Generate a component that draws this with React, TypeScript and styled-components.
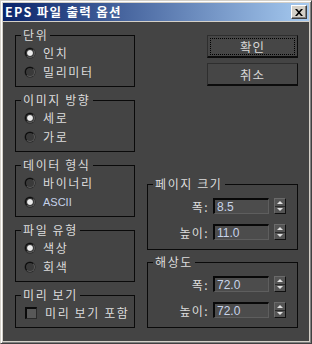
import React from "react";
import styled, { createGlobalStyle } from "styled-components";

const GlobalStyle = createGlobalStyle`
  html, body {
    margin: 0;
    padding: 0;
    background: #444444;
  }
  body {
    font-family: "Noto Sans CJK KR", "Noto Sans", sans-serif;
  }
`;

const Window = styled.div`
  width: 312px;
  height: 344px;
  box-sizing: border-box;
  display: flex;
  flex-direction: column;
  background: #d4d0c8;
  border: 1px solid;
  border-color: #d4d0c8 #404040 #404040 #d4d0c8;
  box-shadow: inset 1px 1px #ffffff, inset -1px -1px #808080;
  padding: 2px;
`;

const TitleBar = styled.div`
  height: 18px;
  flex-shrink: 0;
  display: flex;
  align-items: center;
  justify-content: space-between;
  padding-left: 2px;
  background: linear-gradient(to right, #0a246a, #a6caf0);
`;

const Title = styled.span`
  color: #ffffff;
  font-size: 12.5px;
  font-weight: bold;
  line-height: 18px;
  letter-spacing: 1.3px;
`;

const CloseButton = styled.div`
  width: 16px;
  height: 14px;
  margin-right: 2px;
  box-sizing: border-box;
  display: flex;
  align-items: center;
  justify-content: center;
  background: #d4d0c8;
  border: 1px solid;
  border-color: #ffffff #404040 #404040 #ffffff;
  box-shadow: inset -1px -1px #808080;
`;

const Body = styled.div`
  flex: 1;
  margin-top: 1px;
  display: flex;
  gap: 12px;
  padding: 6px 11px 13px 12px;
  background: #444444;
  color: #dcdcdc;
  font-size: 12px;
`;

const LeftColumn = styled.div`
  width: 120px;
  display: flex;
  flex-direction: column;
  gap: 6px;
`;

const RightColumn = styled.div`
  width: 151px;
  display: flex;
  flex-direction: column;
`;

const ButtonStack = styled.div`
  margin-top: 7px;
  display: flex;
  flex-direction: column;
  align-items: flex-end;
  gap: 5px;
`;

const DialogButton = styled.div<{ $focused?: boolean }>`
  width: 91px;
  height: 23px;
  box-sizing: border-box;
  display: flex;
  align-items: center;
  justify-content: center;
  background: #464646;
  border-top: 1px solid #2e2e2e;
  border-left: 1px solid #2e2e2e;
  border-right: 1px solid #0c0c0c;
  border-bottom: 2px solid #0c0c0c;
  color: #d8d8d8;
  font-size: 12.5px;
  letter-spacing: 1px;
  outline: ${(p) => (p.$focused ? "1px dotted #000" : "none")};
  outline-offset: -4px;
`;

const Group = styled.fieldset`
  margin: 0;
  padding: 0;
  min-width: 0;
  border: 1px solid #0a0a0a;
`;

const Caption = styled.legend`
  margin-left: 5px;
  padding: 0 2px;
  font-size: 12px;
  line-height: 14px;
  letter-spacing: 1.6px;
  color: #dcdcdc;
`;

const OptionList = styled.div`
  padding: 1px 0 5px 9px;
  display: flex;
  flex-direction: column;
`;

const Option = styled.div`
  height: 19px;
  display: flex;
  align-items: center;
  gap: 8px;
`;

const Radio = styled.span<{ $checked?: boolean }>`
  width: 10px;
  height: 10px;
  box-sizing: border-box;
  border-radius: 50%;
  background: ${(p) =>
    p.$checked
      ? "radial-gradient(circle, #ececec 0 2.2px, #bdbdbd 2.7px, #3a3a3a 3.3px)"
      : "#3a3a3a"};
  border: 1px solid;
  border-color: #0a0a0a #5a5a5a #5a5a5a #0a0a0a;
  box-shadow: 0 0 0 0.5px #222;
`;

const Checkbox = styled.span`
  width: 12px;
  height: 12px;
  box-sizing: border-box;
  background: #585858;
  border-top: 2px solid #0a0a0a;
  border-left: 2px solid #0a0a0a;
  border-right: 1px solid #2a2a2a;
  border-bottom: 1px solid #2a2a2a;
`;

const OptionLabel = styled.span<{ $latin?: boolean }>`
  font-family: ${(p) =>
    p.$latin
      ? '"Liberation Sans", Arial, sans-serif'
      : '"Noto Sans CJK KR", "Noto Sans", sans-serif'};
  font-size: ${(p) => (p.$latin ? "11px" : "12px")};
  color: ${(p) => (p.$latin ? "#c4d2ea" : "#dcdcdc")};
  letter-spacing: ${(p) => (p.$latin ? "0" : "1.6px")};
`;

const RightGroups = styled.div`
  margin-top: auto;
  display: flex;
  flex-direction: column;
  gap: 5px;
`;

const FieldList = styled.div`
  padding: 7px 0 9px 0;
  display: flex;
  flex-direction: column;
  gap: 10px;
`;

const FieldRow = styled.div`
  height: 16px;
  display: flex;
  align-items: center;
`;

const FieldLabel = styled.span`
  width: 61px;
  text-align: right;
  font-size: 12px;
  letter-spacing: 1.4px;
  color: #dcdcdc;
`;

const NumberBox = styled.input`
  width: 56px;
  height: 16px;
  margin: 0 0 0 4px;
  box-sizing: border-box;
  padding: 0 0 0 2px;
  background: #4c4c4c;
  border-top: 2px solid #080808;
  border-left: 2px solid #080808;
  border-right: 1px solid #5e5e5e;
  border-bottom: 1px solid #5e5e5e;
  color: #c8d4ea;
  font-family: "Liberation Sans", Arial, sans-serif;
  font-size: 12px;
  outline: none;
`;

const Spinner = styled.div`
  width: 12px;
  height: 16px;
  margin-left: 5px;
  box-sizing: border-box;
  display: flex;
  flex-direction: column;
  background: #545454;
  border: 1px solid;
  border-color: #6a6a6a #101010 #101010 #6a6a6a;
`;

const SpinHalf = styled.div`
  flex: 1;
  display: flex;
  align-items: center;
  justify-content: center;
`;

const Arrow = styled.span<{ $down?: boolean }>`
  width: 0;
  height: 0;
  border-left: 3px solid transparent;
  border-right: 3px solid transparent;
  ${(p) =>
    p.$down
      ? "border-top: 3px solid #e0e0e0;"
      : "border-bottom: 3px solid #e0e0e0;"}
`;

const SpinDivider = styled.div`
  height: 1px;
  background: #2a2a2a;
`;

const NumberField: React.FC<{ label: string; value: string }> = ({ label, value }) => (
  <FieldRow>
    <FieldLabel>{label}</FieldLabel>
    <NumberBox readOnly defaultValue={value} />
    <Spinner>
      <SpinHalf>
        <Arrow />
      </SpinHalf>
      <SpinDivider />
      <SpinHalf>
        <Arrow $down />
      </SpinHalf>
    </Spinner>
  </FieldRow>
);

const RadioOption: React.FC<{ label: string; checked?: boolean; latin?: boolean }> = ({
  label,
  checked,
  latin,
}) => (
  <Option>
    <Radio $checked={checked} />
    <OptionLabel $latin={latin}>{label}</OptionLabel>
  </Option>
);

const App: React.FC = () => {
  return (
    <>
      <GlobalStyle />
      <Window>
        <TitleBar>
          <Title>EPS 파일 출력 옵션</Title>
          <CloseButton>
            <svg width="8" height="7" viewBox="0 0 8 7">
              <path d="M0 0h2l2 2.2L6 0h2L5 3.5 8 7H6L4 4.8 2 7H0l3-3.5z" fill="#000" />
            </svg>
          </CloseButton>
        </TitleBar>

        <Body>
          {/* left column: radio groups */}
          <LeftColumn>
            <Group>
              <Caption>단위</Caption>
              <OptionList>
                <RadioOption label="인치" checked />
                <RadioOption label="밀리미터" />
              </OptionList>
            </Group>
            <Group>
              <Caption>이미지 방향</Caption>
              <OptionList>
                <RadioOption label="세로" checked />
                <RadioOption label="가로" />
              </OptionList>
            </Group>
            <Group>
              <Caption>데이터 형식</Caption>
              <OptionList>
                <RadioOption label="바이너리" />
                <RadioOption label="ASCII" checked latin />
              </OptionList>
            </Group>
            <Group>
              <Caption>파일 유형</Caption>
              <OptionList>
                <RadioOption label="색상" checked />
                <RadioOption label="회색" />
              </OptionList>
            </Group>
            <Group>
              <Caption>미리 보기</Caption>
              <OptionList>
                <Option>
                  <Checkbox />
                  <OptionLabel>미리 보기 포함</OptionLabel>
                </Option>
              </OptionList>
            </Group>
          </LeftColumn>

          {/* right column: buttons and numeric groups */}
          <RightColumn>
            <ButtonStack>
              <DialogButton $focused>확인</DialogButton>
              <DialogButton>취소</DialogButton>
            </ButtonStack>

            <RightGroups>
              <Group>
                <Caption>페이지 크기</Caption>
                <FieldList>
                  <NumberField label="폭:" value="8.5" />
                  <NumberField label="높이:" value="11.0" />
                </FieldList>
              </Group>
              <Group>
                <Caption>해상도</Caption>
                <FieldList>
                  <NumberField label="폭:" value="72.0" />
                  <NumberField label="높이:" value="72.0" />
                </FieldList>
              </Group>
            </RightGroups>
          </RightColumn>
        </Body>
      </Window>
    </>
  );
};

export default App;
